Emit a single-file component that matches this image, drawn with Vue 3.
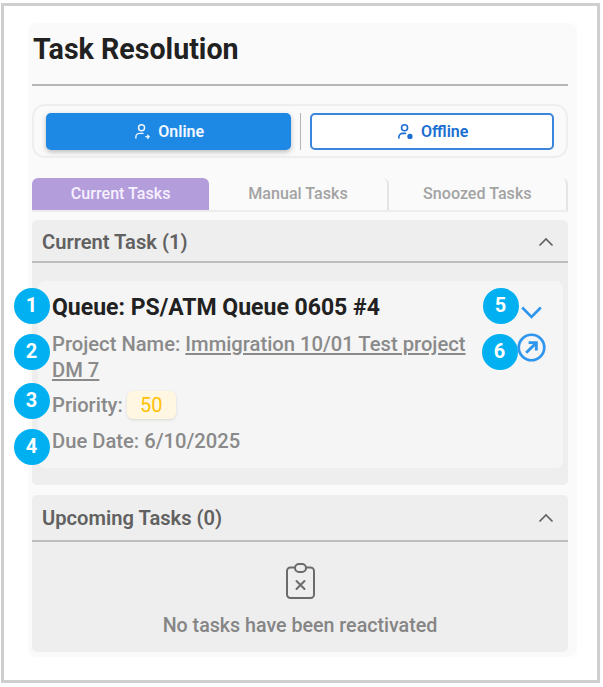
<script setup>
const tabs = [
  { label: 'Current Tasks', active: true },
  { label: 'Manual Tasks', active: false },
  { label: 'Snoozed Tasks', active: false },
]
const badges = [
  { n: 1, x: 31.5, y: 305.5 },
  { n: 2, x: 31.5, y: 351.5 },
  { n: 3, x: 31.5, y: 401 },
  { n: 4, x: 31.5, y: 446.5 },
  { n: 5, x: 500.5, y: 305.5 },
  { n: 6, x: 499.5, y: 351.5 },
]
</script>

<template>
  <div class="page">
    <div class="frame">
      <section class="panel">
        <h1 class="title">Task Resolution</h1>

        <div class="toggle">
          <button class="btn online">
            <svg class="ico" viewBox="0 0 18 18" fill="none" stroke="currentColor" stroke-width="1.5" stroke-linecap="round">
              <circle cx="8" cy="5" r="3.2" />
              <path d="M2 16v-1.2C2 12.4 4 11 6 11h3.5" />
              <path d="M12.500 14.500h3M14.500 12.800l1.500 1.700-1.500 1.700" stroke-width="1.4" />
            </svg>
            Online
          </button>
          <span class="sep"></span>
          <button class="btn offline">
            <svg class="ico" viewBox="0 0 18 18" fill="none" stroke="currentColor" stroke-width="1.7" stroke-linecap="round">
              <circle cx="8" cy="5" r="3.2" />
              <path d="M2 16v-1.2C2 12.4 4 11 6 11h3" />
              <circle cx="13.7" cy="14.2" r="2.8" fill="currentColor" stroke="none" />
            </svg>
            Offline
          </button>
        </div>

        <nav class="tabs">
          <div v-for="t in tabs" :key="t.label" class="tab" :class="{ active: t.active }">{{ t.label }}</div>
        </nav>

        <div class="acc first">
          <header class="acc-head">
            <span>Current Task (1)</span>
            <svg class="caret" viewBox="0 0 16 10" fill="none" stroke="#616161" stroke-width="1.7"><path d="M1.5 8.5L8 2l6.500 6.500" /></svg>
          </header>
          <div class="acc-body">
            <article class="card">
              <div class="info">
                <div class="queue">Queue: PS/ATM Queue 0605 #4</div>
                <div class="line project">Project Name: <u>Immigration 10/01 Test project DM 7</u></div>
                <div class="line priority">Priority: <span class="chip">50</span></div>
                <div class="line due">Due Date: 6/10/2025</div>
              </div>
              <div class="actions">
                <svg class="chev" viewBox="0 0 21 13" fill="none" stroke="#2f96ee" stroke-width="2.600"><path d="M1.200 1.500L10.500 10.800l9.300-9.300" /></svg>
                <svg class="open" viewBox="0 0 30 30" fill="none" stroke="#2f96ee" stroke-width="2.800">
                  <circle cx="15" cy="15" r="13.200" />
                  <path d="M9.500 20.500L20 10M12 10h8v8" stroke-width="3" />
                </svg>
              </div>
            </article>
          </div>
        </div>

        <div class="acc second">
          <header class="acc-head">
            <span>Upcoming Tasks (0)</span>
            <svg class="caret" viewBox="0 0 16 10" fill="none" stroke="#616161" stroke-width="1.7"><path d="M1.5 8.5L8 2l6.500 6.500" /></svg>
          </header>
          <div class="empty">
            <svg class="clip" viewBox="0 0 29 36" fill="none" stroke="#6b6b6b" stroke-width="2" stroke-linecap="round" stroke-linejoin="round">
              <path d="M9 4.500H4.500a3.500 3.500 0 0 0-3.500 3.500v23.500a3.500 3.500 0 0 0 3.500 3.500h20a3.500 3.500 0 0 0 3.500-3.500V8a3.500 3.500 0 0 0-3.500-3.500H20" />
              <rect x="9" y="1" width="11" height="8" rx="4" />
              <path d="M10.500 18l8 8M18.500 18l-8 8" />
            </svg>
            <p>No tasks have been reactivated</p>
          </div>
        </div>
      </section>

      <span
        v-for="b in badges"
        :key="b.n"
        class="badge"
        :style="{ left: b.x - 18 + 'px', top: b.y - 18 + 'px' }"
      >{{ b.n }}</span>
    </div>
  </div>
</template>

<style>
html, body { margin: 0; background: #fff; }
</style>

<style scoped>
.page {
  box-sizing: border-box;
  height: 687px;
  padding: 3px 0 0 1px;
  overflow: hidden;
}
.frame {
  position: relative;
  box-sizing: border-box;
  width: 599px;
  height: 680px;
  border: 3px solid #cfcfcf;
  padding: 17px 20px 23px 24px;
  font-family: Roboto, "Liberation Sans", sans-serif;
  background: #fff;
}
.badge {
  position: absolute;
  width: 36px;
  height: 36px;
  margin-left: -4px;
  margin-top: -6px;
  border-radius: 50%;
  background: #00b0f0;
  color: #fff;
  font-size: 20px;
  font-weight: 700;
  line-height: 34px;
  text-align: center;
}
.panel {
  box-sizing: border-box;
  height: 634px;
  padding: 0 9px 0 4px;
  background: #fafafa;
  border-radius: 8px;
}
.title {
  box-sizing: border-box;
  height: 63px;
  margin: 0;
  padding: 10px 0 0 1px;
  border-bottom: 2px solid #b5b5b5;
  font-size: 28.600px;
  font-weight: 700;
  line-height: 32px;
  color: #212121;
}
.toggle {
  box-sizing: border-box;
  display: flex;
  align-items: center;
  height: 54px;
  margin-top: 18px;
  padding: 0 12px;
  border: 2px solid #eeeeee;
  border-radius: 13px;
}
.btn {
  box-sizing: border-box;
  flex: 1 1 240px;
  display: flex;
  align-items: center;
  justify-content: center;
  gap: 7px;
  height: 37px;
  padding: 0 0 0 2px;
  border-radius: 5px;
  font-family: inherit;
  font-size: 16px;
  font-weight: 600;
}
.online {
  border: 0;
  background: #1e88e5;
  color: #f2f8ff;
  box-shadow: 0 2px 5px rgba(0, 0, 0, 0.25);
}
.offline {
  border: 2px solid #3b85dc;
  background: #fff;
  color: #1b6fd1;
}
.ico { width: 17px; height: 17px; }
.sep {
  width: 1px;
  height: 37px;
  margin: 0 9px;
  background: #b5b5b5;
}
.tabs {
  display: flex;
  height: 34px;
  margin-top: 20px;
  border-bottom: 2px solid #ededed;
  box-sizing: border-box;
}
.tab {
  flex: 1 1 170px;
  border-radius: 6px 6px 0 0;
  border-right: 2px solid #e4e4e4;
  font-size: 16.100px;
  font-weight: 500;
  line-height: 32px;
  text-align: center;
  color: #a3a3a3;
}
.tab.active {
  background: #b39ddb;
  color: #f6f0ff;
  border-right: 0;
}
.acc {
  background: #eeeeee;
  border-radius: 5px;
}
.acc.first { margin-top: 8px; }
.acc.second { margin-top: 10px; }
.acc-head {
  box-sizing: border-box;
  display: flex;
  align-items: center;
  justify-content: space-between;
  height: 43px;
  padding: 2px 14px 0 10px;
  border-bottom: 2px solid #bdbdbd;
  font-size: 20.150px;
  font-weight: 600;
  color: #616161;
}
.second .acc-head { height: 47px; padding-top: 0; }
.caret { width: 16px; height: 10px; }
.acc-body { padding: 18px 5px 17px 6px; }
.card {
  box-sizing: border-box;
  display: flex;
  height: 187px;
  padding: 14px 17px 0 14px;
  background: #f5f5f5;
  border-radius: 7px;
}
.info { width: 430px; }
.queue {
  font-size: 23px;
  font-weight: 700;
  line-height: 26px;
  color: #212121;
}
.line {
  font-size: 20.200px;
  font-weight: 500;
  line-height: 26px;
  color: #8a8a8a;
}
.project { margin-top: 10px; }
.priority { margin-top: 8px; }
.due { margin-top: 9px; }
.chip {
  display: inline-block;
  width: 49px;
  height: 28px;
  margin-left: -1px;
  border-radius: 6px;
  background: #fff7e1;
  box-shadow: 0 1px 3px rgba(0, 0, 0, 0.12);
  font-size: 20px;
  font-weight: 400;
  line-height: 28px;
  text-align: center;
  color: #ffc107;
}
.actions {
  flex: 1;
  display: flex;
  flex-direction: column;
  align-items: flex-end;
  padding-top: 11px;
}
.chev { width: 21px; height: 13px; margin-right: 4px; }
.open { width: 29px; height: 29px; margin-top: 14px; }
.empty {
  display: flex;
  flex-direction: column;
  align-items: center;
  padding-top: 21px;
  height: 110px;
  box-sizing: border-box;
}
.clip { width: 29px; height: 36px; }
.empty p {
  margin: 15px 0 0;
  font-size: 19.650px;
  font-weight: 500;
  color: #858585;
}
</style>
